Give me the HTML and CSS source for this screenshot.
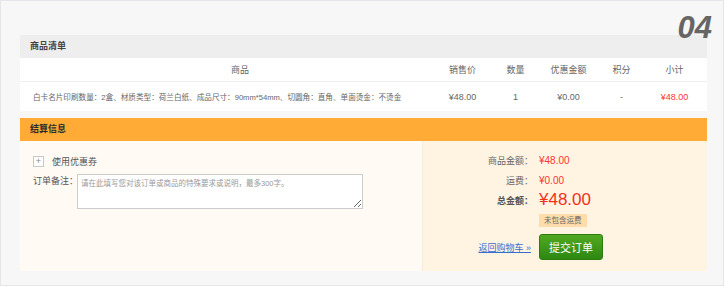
FILE: index.html
```html
<!DOCTYPE html>
<html lang="zh-CN">
<head>
    <meta charset="UTF-8">
    <title>结算信息</title>
    <link rel="stylesheet" href="styles.css">
</head>
<body>
    <div class="page">
        <div class="step">04</div>

        <div class="box">
            <div class="box-title">商品清单</div>
            <div class="goods-head">
                <div class="col-name">商品</div>
                <div>销售价</div>
                <div>数量</div>
                <div>优惠金额</div>
                <div>积分</div>
                <div>小计</div>
            </div>
            <div class="goods-row">
                <div class="col-name">白卡名片印刷数量：2盒、材质类型：荷兰白纸、成品尺寸：90mm*54mm、切圆角：直角、单面烫金：不烫金</div>
                <div>¥48.00</div>
                <div>1</div>
                <div>¥0.00</div>
                <div>-</div>
                <div class="red">¥48.00</div>
            </div>
        </div>

        <div class="box settle">
            <div class="box-title orange">结算信息</div>
            <div class="settle-body">
                <div class="settle-left">
                    <div class="coupon">
                        <span class="plus-box">+</span>
                        <span>使用优惠券</span>
                    </div>
                    <div class="remark">
                        <label for="remark">订单备注：</label>
                        <textarea id="remark" placeholder="请在此填写您对该订单或商品的特殊要求或说明，最多300字。"></textarea>
                    </div>
                </div>
                <div class="settle-right">
                    <div class="label">商品金额：</div>
                    <div class="red">¥48.00</div>
                    <div class="label">运费：</div>
                    <div class="red">¥0.00</div>
                    <div class="label bold">总金额：</div>
                    <div class="red total">¥48.00</div>
                    <div></div>
                    <div><span class="tag">未包含运费</span></div>
                    <a class="back-link" href="#">返回购物车 »</a>
                    <div><button class="submit-btn">提交订单</button></div>
                </div>
            </div>
        </div>
    </div>
</body>
</html>
```

FILE: styles.css
```css
body {
    margin: 0;
    background-color: #fff;
    font-family: "Liberation Sans", "Noto Sans CJK SC", sans-serif;
    color: #555;
}
.page {
    position: relative;
    width: 724px;
    height: 286px;
    box-sizing: border-box;
    padding: 34px 16px 0 19px;
    background-color: #f7f7f7;
    border: 1px solid #e6e5ea;
}
/* step number sits over the top of the first box */
.step {
    position: absolute;
    top: 11px;
    right: 11px;
    font-size: 31px;
    line-height: 1;
    font-weight: bold;
    font-style: italic;
    color: #666;
}
.box {
    width: 687px;
    background-color: #fff;
}
.box-title {
    height: 23px;
    line-height: 23px;
    padding-left: 10px;
    font-size: 9px;
    font-weight: bold;
    color: #444;
    background-color: #eeeeee;
}
.box-title.orange {
    background-color: #ffab35;
    color: #2a2a2a;
}
.goods-head, .goods-row {
    display: grid;
    grid-template-columns: 416px 53px 53px 53px 53px 53px;
    align-items: center;
    text-align: center;
}
.goods-head {
    height: 23px;
    font-size: 9px;
    color: #666;
}
.goods-head .col-name {
    padding-left: 24px;
}
.goods-row {
    height: 29px;
    border-top: 1px solid #eee;
    font-size: 9px;
    color: #666;
}
.goods-row .col-name {
    text-align: left;
    padding-left: 13px;
    font-size: 7.6px;
    white-space: nowrap;
}
.red {
    color: #f33;
}
.settle {
    margin-top: 7px;
}
.settle-body {
    display: grid;
    grid-template-columns: 403px 284px;
    height: 130px;
}
.settle-left {
    background-color: #fffaf3;
    border-right: 1px solid #f6ecdc;
    padding: 15px 0 0 13px;
    font-size: 9px;
    color: #555;
}
.coupon {
    display: flex;
    align-items: center;
    gap: 8px;
    height: 11px;
}
.plus-box {
    width: 9px;
    height: 9px;
    line-height: 9px;
    border: 1px solid #c8c8c8;
    background-color: #fff;
    text-align: center;
    font-size: 9px;
    color: #888;
}
.remark {
    display: flex;
    margin-top: 7px;
}
.remark label {
    flex-shrink: 0;
    width: 44px;
    line-height: 14px;
    white-space: nowrap;
}
.remark textarea {
    width: 286px;
    height: 35px;
    box-sizing: border-box;
    margin: 0;
    padding: 2px 3px;
    border: 1px solid #ccc;
    font-family: "Liberation Sans", "Noto Sans CJK SC", sans-serif;
    font-size: 7.5px;
    background-color: #fff;
}
.remark textarea::placeholder {
    color: #999;
}
.settle-right {
    background-color: #fff3e2;
    display: grid;
    grid-template-columns: 110px auto;
    grid-auto-rows: 20px;
    column-gap: 6px;
    align-items: center;
    align-content: start;
    padding-top: 9px;
    font-size: 9px;
}
.settle-right .red {
    font-size: 10px;
}
.label {
    text-align: right;
    color: #666;
}
.label.bold {
    font-weight: bold;
    color: #555;
}
.settle-right .total {
    font-size: 17px;
    color: #f2301b;
}
.tag {
    display: inline-block;
    height: 13px;
    line-height: 13px;
    padding: 0 5px;
    font-size: 7.5px;
    color: #666;
    background-color: #ffdcaa;
}
.back-link {
    justify-self: end;
    margin-right: 2px;
    margin-top: 14px;
    color: #3a6ccf;
    font-size: 9px;
}
.submit-btn {
    margin-top: 14px;
    width: 64px;
    height: 26px;
    border: 1px solid #2c7c10;
    border-radius: 3px;
    background: linear-gradient(#52a81f, #2d8812);
    color: #fff;
    font-family: "Liberation Sans", "Noto Sans CJK SC", sans-serif;
    font-size: 11px;
    cursor: pointer;
}
```
